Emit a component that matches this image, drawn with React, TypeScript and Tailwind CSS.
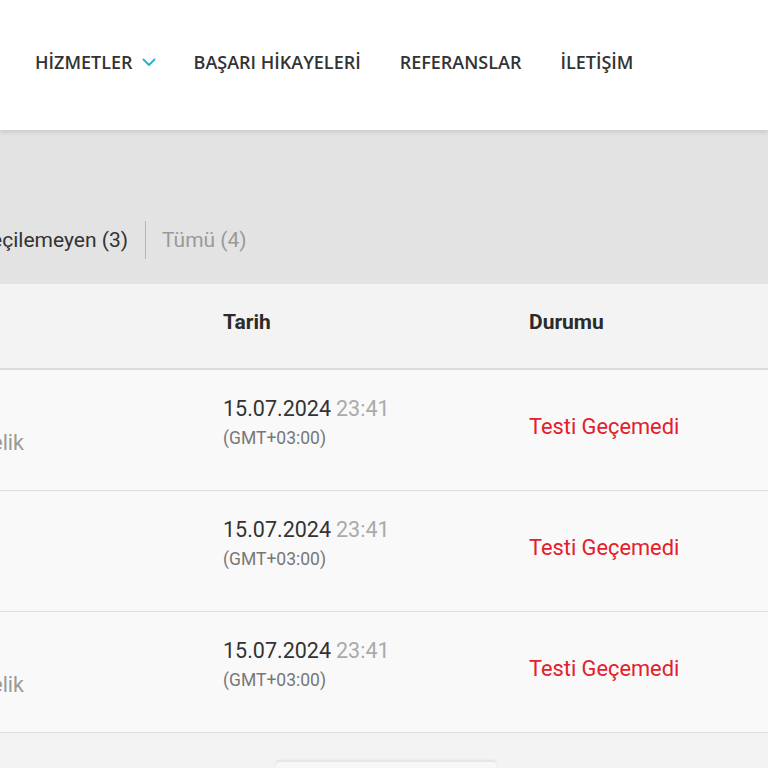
import React from "react";

const rows = [{ sub: "Üyelik" }, { sub: "" }, { sub: "Üyelik" }];

export default function App() {
  return (
    <div className="w-[768px] h-[768px] overflow-hidden bg-[#f3f3f3]" style={{ fontFamily: "Roboto, 'Liberation Sans', sans-serif" }}>
      <header
        className="relative z-10 h-[130px] bg-white flex items-start pt-[49px] pl-[35px] gap-[39px] text-[18px] font-semibold text-[#333] shadow-[0_2px_5px_rgba(0,0,0,0.12)]"
        style={{ fontFamily: "'Open Sans', 'Liberation Sans', sans-serif" }}
      >
        <div className="flex items-center leading-[26px]">
          <span>HİZMETLER</span>
          <svg className="ml-[9px] mt-[1px]" width="14" height="9" viewBox="0 0 14 9" fill="none">
            <path d="M1.5 1.5 L7 7 L12.5 1.5" stroke="#2bb5c9" strokeWidth="2" strokeLinecap="round" strokeLinejoin="round" />
          </svg>
        </div>
        <span className="leading-[26px] -ml-[1px]">BAŞARI HİKAYELERİ</span>
        <span className="leading-[26px]">REFERANSLAR</span>
        <span className="leading-[26px]">İLETİŞİM</span>
      </header>

      <div className="h-[154px] bg-[#e3e3e3] pt-[91px]">
        <div className="flex items-center h-[38px]">
          <div className="w-[128px] flex justify-end whitespace-nowrap text-[21px] text-[#333] leading-[28px]">
            Geçilemeyen (3)
          </div>
          <div className="ml-[17px] w-px h-[38px] bg-[#b5b5b5]" />
          <div className="ml-[16px] text-[21px] text-[#9a9a9a] leading-[28px] whitespace-nowrap">Tümü (4)</div>
        </div>
      </div>

      <div className="h-[86px] bg-[#f3f3f3] border-b-2 border-[#dcdcdc] flex items-center pb-[6px] text-[21px] font-bold text-[#2b2b2b]">
        <div className="w-[223px]" />
        <div className="w-[306px]">Tarih</div>
        <div>Durumu</div>
      </div>

      {rows.map((r, i) => (
        <div key={i} className="h-[121px] bg-[#f9f9f9] border-b border-[#dedede] flex">
          <div className="w-[223px] pt-[59px]">
            <div className="w-[24px] flex justify-end whitespace-nowrap text-[21.5px] leading-[28px] text-[#999]">{r.sub}</div>
          </div>
          <div className="w-[306px] pt-[25px]">
            <div className="text-[21.5px] leading-[28px] whitespace-nowrap">
              <span className="text-[#333]">15.07.2024</span>
              <span className="text-[#aaa] ml-[5px]">23:41</span>
            </div>
            <div className="mt-[3px] text-[17.5px] leading-[24px] text-[#777]">(GMT+03:00)</div>
          </div>
          <div className="pt-[43px] text-[21.8px] leading-[28px] text-[#e3202b] whitespace-nowrap">Testi Geçemedi</div>
        </div>
      ))}

      <div className="h-[36px] bg-[#f3f3f3] flex">
        <div className="ml-[276px] mt-[28px] w-[220px] h-[30px] rounded-[3px] bg-[#f7f7f7] border-t border-[#e6e6e6] shadow-[0_-1px_2px_rgba(0,0,0,0.08)]" />
      </div>
    </div>
  );
}
